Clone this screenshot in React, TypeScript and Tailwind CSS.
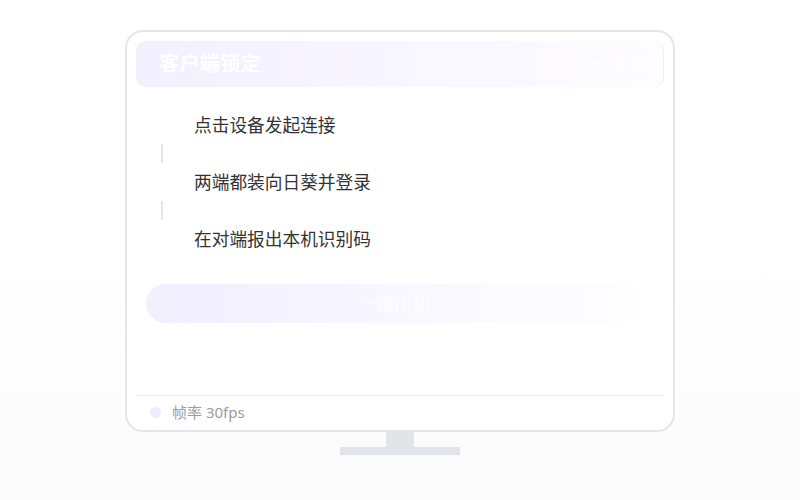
export default function App() {
  const steps = ['点击设备发起连接', '两端都装向日葵并登录', '在对端报出本机识别码'];

  return (
    <div
      className="w-[800px] h-[500px] flex flex-col items-center bg-gradient-to-b from-white from-50% to-[#fbfbfc] pt-[30px]"
      style={{ fontFamily: '"Noto Sans", "Noto Sans CJK SC", sans-serif' }}
    >
      <div className="w-[550px] h-[402px] rounded-[18px] border-2 border-[#e4e6ea] bg-white flex flex-col px-[9px] pt-[9px]">
        <div className="h-[46px] rounded-[10px] bg-gradient-to-r from-[#f3f0ff] to-[#fdfcff] flex items-center pl-[23px] pr-[10px] border-r border-[#eceef2]">
          <span className="text-[20px] font-bold text-white tracking-[0.4px]">客户端锁定</span>
          <div className="ml-auto flex gap-[7px] mr-[10px]">
            <span className="w-[12px] h-[12px] rounded-full bg-white/60" />
            <span className="w-[12px] h-[12px] rounded-full bg-white/60" />
            <span className="w-[12px] h-[12px] rounded-full bg-white/60" />
          </div>
        </div>

        <div className="flex flex-col pl-[25px] mt-[23px]">
          {steps.map((s, i) => (
            <div key={s} className="flex flex-col">
              <div className="h-[30px] flex items-center pl-[33px] text-[17.7px] text-[#333333]">{s}</div>
              {i < steps.length - 1 && (
                <div className="h-[27px] flex items-center">
                  <div className="w-[2px] h-[19px] bg-[#e3e5ea]" />
                </div>
              )}
            </div>
          ))}
        </div>

        <div className="mt-[30px] ml-[10px] w-[496px] h-[39px] rounded-full bg-gradient-to-r from-[#f2efff] to-[#fefeff] flex items-center justify-center">
          <span
            className="text-[18px] text-white"
            style={{ fontFamily: '"Noto Serif CJK SC", "Liberation Serif", serif' }}
          >
            一键添加
          </span>
        </div>

        <div className="flex-1" />

        <div className="border-t border-[#eceef1] h-[34px] flex items-center pl-[14px] mb-[1px]">
          <span className="w-[11px] h-[11px] rounded-full bg-[#efebfd]" />
          <span className="ml-[11px] text-[15px] text-[#9a9ca3]">帧率 30fps</span>
        </div>
      </div>

      <div className="w-[28px] h-[15px] bg-[#e1e4e8]" />
      <div className="w-[120px] h-[8px] bg-[#e1e4e8]" />
    </div>
  );
}
